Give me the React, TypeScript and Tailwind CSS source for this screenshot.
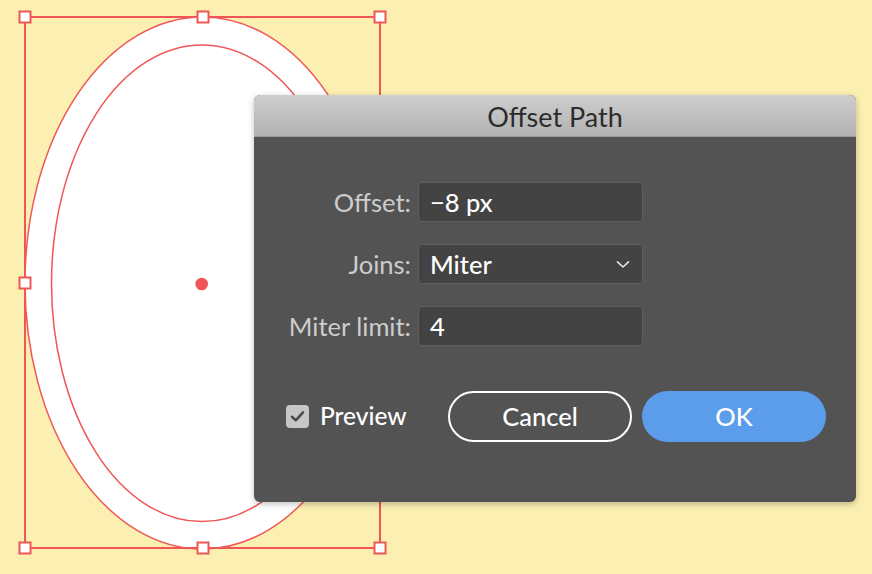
import * as React from 'react';

// ──────────────────────────────────────────────────────────────────────────────
// Canvas artwork (ellipse + selection box)
// ──────────────────────────────────────────────────────────────────────────────
const RED = '#f05656';

const handles: [number, number][] = [
  [25, 17],
  [203, 17],
  [380, 17],
  [25, 283],
  [380, 283],
  [25, 548],
  [203, 548],
  [380, 548],
];

function Artwork() {
  return (
    <svg className="absolute left-0 top-0" width={872} height={574} viewBox="0 0 872 574">
      <ellipse cx={202.5} cy={283} rx={177.5} ry={266} fill="#ffffff" stroke={RED} strokeWidth={1.5} />
      <ellipse cx={202} cy={283.3} rx={150.5} ry={238.3} fill="#ffffff" stroke={RED} strokeWidth={1.5} />
      <rect x={25} y={17} width={355} height={531} fill="none" stroke={RED} strokeWidth={2} />
      {handles.map(([x, y]) => (
        <rect key={`${x}-${y}`} x={x - 5.5} y={y - 5.5} width={11} height={11} fill="#ffffff" stroke={RED} strokeWidth={2} />
      ))}
      <circle cx={201.7} cy={284} r={6.3} fill={RED} />
    </svg>
  );
}

// ──────────────────────────────────────────────────────────────────────────────
// Dialog parts
// ──────────────────────────────────────────────────────────────────────────────
function FieldLabel({ children }: { children: React.ReactNode }) {
  return (
    <label className="flex items-center justify-end pt-[1px] text-[25.5px] leading-none text-[#cdcdcd]">
      {children}
    </label>
  );
}

function Field({ children }: { children: React.ReactNode }) {
  return (
    <div className="flex h-[40px] items-center rounded-[4px] border border-[#5e5e5e] bg-[#434343] pl-[11px] pr-[12px] pt-[1px] text-[25.5px] font-medium leading-none text-white">
      {children}
    </div>
  );
}

function Chevron() {
  return (
    <svg width={14} height={9} viewBox="0 0 14 9" className="ml-auto">
      <path d="M1.5 1.8 L7 7 L12.5 1.8" fill="none" stroke="#e6e6e6" strokeWidth={1.6} strokeLinecap="round" strokeLinejoin="round" />
    </svg>
  );
}

function Checkbox() {
  return (
    <div className="flex h-[23px] w-[23px] items-center justify-center rounded-[4px] bg-[#c6c6c6]">
      <svg width={15} height={13} viewBox="0 0 15 13">
        <path d="M2 6.8 L5.8 10.4 L13 2.4" fill="none" stroke="#4c4c4c" strokeWidth={2.6} strokeLinecap="round" strokeLinejoin="round" />
      </svg>
    </div>
  );
}

function OffsetPathDialog() {
  return (
    <div className="absolute left-[254px] top-[95px] flex h-[407px] w-[602px] flex-col overflow-hidden rounded-[6px] bg-[#535353] shadow-[0_2px_6px_rgba(0,0,0,0.25)]">
      {/* title bar */}
      <div className="flex h-[42px] shrink-0 items-center justify-center border-b border-[#9c9c9c] bg-gradient-to-b from-[#cecece] to-[#b2b2b2] pt-[1px] text-[27px] leading-none text-[#2c2c2c]">
        Offset Path
      </div>

      {/* fields */}
      <div className="mt-[45px] grid grid-cols-[157px_225px] gap-x-[7px] gap-y-[22px]">
        <FieldLabel>Offset:</FieldLabel>
        <Field>−8 px</Field>

        <FieldLabel>Joins:</FieldLabel>
        <Field>
          Miter
          <Chevron />
        </Field>

        <FieldLabel>Miter limit:</FieldLabel>
        <Field>4</Field>
      </div>

      {/* footer */}
      <div className="mt-[45px] flex items-center pl-[32px]">
        <div className="flex items-center gap-[11px]">
          <Checkbox />
          <span className="text-[24.5px] font-medium leading-none text-white">Preview</span>
        </div>
        <button className="ml-auto flex h-[51px] w-[184px] items-center justify-center rounded-full border-2 border-white pt-[1px] text-[25.5px] font-medium leading-none text-white">
          Cancel
        </button>
        <button className="ml-[10px] mr-[30px] flex h-[51px] w-[184px] items-center justify-center rounded-full bg-[#5b9deb] pt-[1px] text-[25.5px] font-medium leading-none text-white">
          OK
        </button>
      </div>
    </div>
  );
}

// ──────────────────────────────────────────────────────────────────────────────
// App
// ──────────────────────────────────────────────────────────────────────────────
export default function App() {
  return (
    <div className="relative h-[574px] w-[872px] overflow-hidden bg-[#fbefb1] font-['Lato','Open_Sans',sans-serif]">
      <Artwork />
      <OffsetPathDialog />
    </div>
  );
}
